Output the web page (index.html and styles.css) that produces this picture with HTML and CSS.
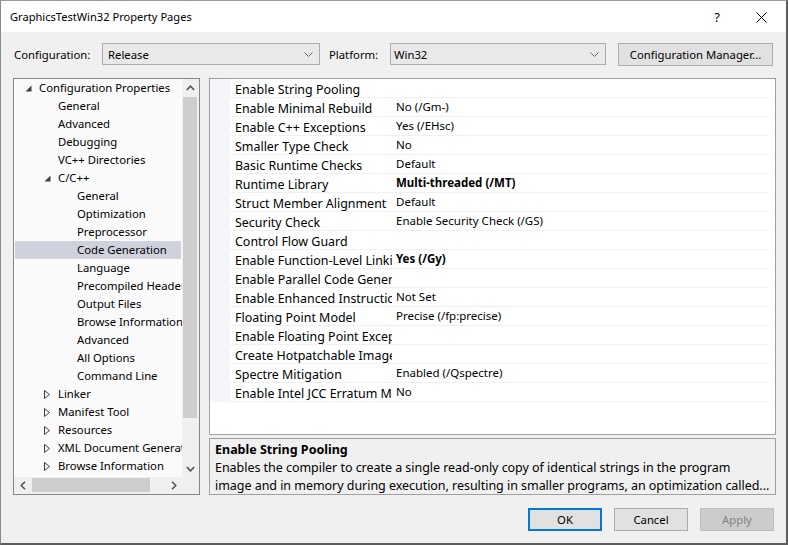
FILE: index.html
```html
<!DOCTYPE html>
<html>
<head>
<meta charset="utf-8">
<link rel="stylesheet" href="styles.css">
</head>
<body>
<div class="window">
  <div class="titlebar">
    <span class="title">GraphicsTestWin32 Property Pages</span>
    <span class="help">?</span>
    <span class="close"><svg width="11" height="11" viewBox="0 0 11 11"><path d="M0.5 0.5 L10.5 10.5 M10.5 0.5 L0.5 10.5" stroke="#000" stroke-width="1" fill="none"/></svg></span>
  </div>
  <div class="toolbar">
    <span class="label label-config">Configuration:</span>
    <div class="combo combo-config"><span class="combo-text">Release</span><svg class="chev" width="9" height="5" viewBox="0 0 9 5"><polyline points="0.5,0.5 4.5,4.5 8.5,0.5" fill="none" stroke="#6a6a6a" stroke-width="1"/></svg></div>
    <span class="label label-platform">Platform:</span>
    <div class="combo combo-platform"><span class="combo-text">Win32</span><svg class="chev" width="9" height="5" viewBox="0 0 9 5"><polyline points="0.5,0.5 4.5,4.5 8.5,0.5" fill="none" stroke="#6a6a6a" stroke-width="1"/></svg></div>
    <div class="btn btn-cfgmgr">Configuration Manager...</div>
  </div>
  <div class="main">
    <div class="tree">
      <div class="tree-items">
        <div class="trow l0"><span class="arrow"><svg width="7" height="7" viewBox="0 0 7 7"><polygon points="6.5,0.5 6.5,6.5 0.5,6.5" fill="#404040"/></svg></span><span class="ttext">Configuration Properties</span></div>
        <div class="trow l1"><span class="arrow"></span><span class="ttext">General</span></div>
        <div class="trow l1"><span class="arrow"></span><span class="ttext">Advanced</span></div>
        <div class="trow l1"><span class="arrow"></span><span class="ttext">Debugging</span></div>
        <div class="trow l1"><span class="arrow"></span><span class="ttext">VC++ Directories</span></div>
        <div class="trow l1"><span class="arrow"><svg width="7" height="7" viewBox="0 0 7 7"><polygon points="6.5,0.5 6.5,6.5 0.5,6.5" fill="#404040"/></svg></span><span class="ttext">C/C++</span></div>
        <div class="trow l2"><span class="arrow"></span><span class="ttext">General</span></div>
        <div class="trow l2"><span class="arrow"></span><span class="ttext">Optimization</span></div>
        <div class="trow l2"><span class="arrow"></span><span class="ttext">Preprocessor</span></div>
        <div class="trow l2 selected"><span class="arrow"></span><span class="ttext">Code Generation</span></div>
        <div class="trow l2"><span class="arrow"></span><span class="ttext">Language</span></div>
        <div class="trow l2"><span class="arrow"></span><span class="ttext">Precompiled Headers</span></div>
        <div class="trow l2"><span class="arrow"></span><span class="ttext">Output Files</span></div>
        <div class="trow l2"><span class="arrow"></span><span class="ttext">Browse Information</span></div>
        <div class="trow l2"><span class="arrow"></span><span class="ttext">Advanced</span></div>
        <div class="trow l2"><span class="arrow"></span><span class="ttext">All Options</span></div>
        <div class="trow l2"><span class="arrow"></span><span class="ttext">Command Line</span></div>
        <div class="trow l1"><span class="arrow"><svg width="6" height="9" viewBox="0 0 6 9"><polygon points="0.5,0.5 5.5,4.5 0.5,8.5" fill="none" stroke="#404040" stroke-width="1"/></svg></span><span class="ttext">Linker</span></div>
        <div class="trow l1"><span class="arrow"><svg width="6" height="9" viewBox="0 0 6 9"><polygon points="0.5,0.5 5.5,4.5 0.5,8.5" fill="none" stroke="#404040" stroke-width="1"/></svg></span><span class="ttext">Manifest Tool</span></div>
        <div class="trow l1"><span class="arrow"><svg width="6" height="9" viewBox="0 0 6 9"><polygon points="0.5,0.5 5.5,4.5 0.5,8.5" fill="none" stroke="#404040" stroke-width="1"/></svg></span><span class="ttext">Resources</span></div>
        <div class="trow l1"><span class="arrow"><svg width="6" height="9" viewBox="0 0 6 9"><polygon points="0.5,0.5 5.5,4.5 0.5,8.5" fill="none" stroke="#404040" stroke-width="1"/></svg></span><span class="ttext">XML Document Generator</span></div>
        <div class="trow l1"><span class="arrow"><svg width="6" height="9" viewBox="0 0 6 9"><polygon points="0.5,0.5 5.5,4.5 0.5,8.5" fill="none" stroke="#404040" stroke-width="1"/></svg></span><span class="ttext">Browse Information</span></div>
      </div>
      <div class="vscroll">
        <div class="sbtn"><svg width="9" height="6" viewBox="0 0 9 6"><polyline points="0.8,5 4.5,1.2 8.2,5" fill="none" stroke="#505050" stroke-width="1.5"/></svg></div>
        <div class="vtrack"><div class="vthumb"></div></div>
        <div class="sbtn"><svg width="9" height="6" viewBox="0 0 9 6"><polyline points="0.8,1 4.5,4.8 8.2,1" fill="none" stroke="#505050" stroke-width="1.5"/></svg></div>
      </div>
      <div class="hscroll">
        <div class="sbtn"><svg width="6" height="9" viewBox="0 0 6 9"><polyline points="5,0.8 1.2,4.5 5,8.2" fill="none" stroke="#505050" stroke-width="1.5"/></svg></div>
        <div class="htrack"><div class="hthumb"></div></div>
        <div class="sbtn"><svg width="6" height="9" viewBox="0 0 6 9"><polyline points="1,0.8 4.8,4.5 1,8.2" fill="none" stroke="#505050" stroke-width="1.5"/></svg></div>
      </div>
      <div class="corner"></div>
    </div>
    <div class="right">
      <div class="grid">
        <div class="grow"><span class="gutter"></span><span class="gname">Enable String Pooling</span><span class="gval"></span></div>
        <div class="grow"><span class="gutter"></span><span class="gname">Enable Minimal Rebuild</span><span class="gval">No (/Gm-)</span></div>
        <div class="grow"><span class="gutter"></span><span class="gname">Enable C++ Exceptions</span><span class="gval">Yes (/EHsc)</span></div>
        <div class="grow"><span class="gutter"></span><span class="gname">Smaller Type Check</span><span class="gval">No</span></div>
        <div class="grow"><span class="gutter"></span><span class="gname">Basic Runtime Checks</span><span class="gval">Default</span></div>
        <div class="grow"><span class="gutter"></span><span class="gname">Runtime Library</span><span class="gval bold">Multi-threaded (/MT)</span></div>
        <div class="grow"><span class="gutter"></span><span class="gname">Struct Member Alignment</span><span class="gval">Default</span></div>
        <div class="grow"><span class="gutter"></span><span class="gname">Security Check</span><span class="gval">Enable Security Check (/GS)</span></div>
        <div class="grow"><span class="gutter"></span><span class="gname">Control Flow Guard</span><span class="gval"></span></div>
        <div class="grow"><span class="gutter"></span><span class="gname">Enable Function-Level Linking</span><span class="gval bold">Yes (/Gy)</span></div>
        <div class="grow"><span class="gutter"></span><span class="gname">Enable Parallel Code Generation</span><span class="gval"></span></div>
        <div class="grow"><span class="gutter"></span><span class="gname">Enable Enhanced Instruction Set</span><span class="gval">Not Set</span></div>
        <div class="grow"><span class="gutter"></span><span class="gname">Floating Point Model</span><span class="gval">Precise (/fp:precise)</span></div>
        <div class="grow"><span class="gutter"></span><span class="gname">Enable Floating Point Exceptions</span><span class="gval"></span></div>
        <div class="grow"><span class="gutter"></span><span class="gname">Create Hotpatchable Image</span><span class="gval"></span></div>
        <div class="grow"><span class="gutter"></span><span class="gname">Spectre Mitigation</span><span class="gval">Enabled (/Qspectre)</span></div>
        <div class="grow"><span class="gutter"></span><span class="gname">Enable Intel JCC Erratum Mitigation</span><span class="gval">No</span></div>
      </div>
      <div class="desc">
        <div class="desc-title">Enable String Pooling</div>
        <div class="desc-line">Enables the compiler to create a single read-only copy of identical strings in the program</div>
        <div class="desc-line">image and in memory during execution, resulting in smaller programs, an optimization called...</div>
      </div>
    </div>
  </div>
  <div class="buttons">
    <div class="btn btn-dlg btn-ok">OK</div>
    <div class="btn btn-dlg">Cancel</div>
    <div class="btn btn-dlg btn-disabled">Apply</div>
  </div>
</div>
</body>
</html>
```

FILE: styles.css
```css
* { box-sizing: border-box; margin: 0; padding: 0; }
html, body { margin: 0; width: 788px; height: 545px; overflow: hidden; }
body {
  font-family: "Noto Sans", "Open Sans", sans-serif;
  font-size: 11.3px;
  color: #000;
  background: #f0f0f0;
}
.window {
  width: 788px;
  height: 545px;
  display: flex;
  flex-direction: column;
  background: #f0f0f0;
  border-left: 1px solid #8a8a8a;
  border-right: 2px solid #5c5c5c;
  border-bottom: 2px solid #5c5c5c;
  border-top: 1px solid #9a9a9a;
}
.titlebar {
  height: 31px;
  flex: none;
  background: #fff;
  display: flex;
  align-items: center;
  padding-left: 9px;
  font-size: 11.1px;
}
.title { flex: 1; }
.help { font-size: 13px; width: 14px; text-align: center; margin-right: 32px; }
.close { width: 11px; height: 11px; display: flex; margin-right: 19px; margin-top: 1px; }

.toolbar {
  flex: none;
  height: 24px;
  margin-top: 10px;
  padding-left: 13px;
  display: flex;
  align-items: center;
}
.label { display: block; }
.label-config { width: 88px; }
.label-platform { width: 61px; margin-left: 9px; }
.combo {
  height: 22px;
  border: 1px solid #adadad;
  background: #e9e9e9;
  display: flex;
  align-items: center;
  padding-left: 5px;
  padding-right: 6px;
}
.combo-text { flex: 1; }
.combo-config { width: 218px; }
.combo-platform { width: 216px; padding-left: 3px; }
.chev { display: block; }
.btn {
  border: 1px solid #adadad;
  background: #e1e1e1;
  display: flex;
  align-items: center;
  justify-content: center;
}
.btn-cfgmgr { width: 155px; height: 23px; margin-left: 12px; }

.main {
  flex: none;
  height: 417px;
  margin-top: 12px;
  padding-left: 12px;
  display: flex;
  gap: 9px;
}
.tree {
  width: 187px;
  height: 417px;
  border: 1px solid #828790;
  background: #fafafa;
  display: grid;
  grid-template-columns: 168px 17px;
  grid-template-rows: 398px 17px;
}
.tree-items {
  overflow: hidden;
  white-space: nowrap;
}
.trow {
  height: 18px;
  line-height: 18px;
  display: flex;
  align-items: center;
  padding-left: 6px;
  margin: 0 1px;
}
.trow.l0 { padding-left: 5px; }
.trow.l1 { padding-left: 24px; }
.trow.l2 { padding-left: 43px; }
.trow.selected { background: #cfd1dc; }
.arrow {
  flex: none;
  width: 19px;
  height: 18px;
  display: flex;
  align-items: center;
  padding-left: 5px;
}
.trow.l0 .arrow svg, .trow.l1 .arrow svg[height="7"] { margin-top: 1px; }
.ttext { flex: none; }

.vscroll {
  background: #f0f0f0;
  display: flex;
  flex-direction: column;
}
.sbtn {
  width: 17px;
  height: 17px;
  flex: none;
  display: flex;
  align-items: center;
  justify-content: center;
}
.vtrack { flex: 1; padding: 1px 1px 0 1px; }
.vthumb { width: 14px; height: 321px; background: #cdcdcd; }
.hscroll {
  background: #f0f0f0;
  display: flex;
}
.htrack { flex: 1; padding: 1px 0 0 1px; }
.hthumb { width: 118px; height: 14px; background: #cdcdcd; }
.corner { background: #f0f0f0; }

.right {
  width: 567px;
  display: flex;
  flex-direction: column;
  gap: 3px;
}
.grid {
  height: 357px;
  border: 1px solid #a0a0a0;
  background: #fff;
  padding-right: 6px;
}
.grow {
  height: 19px;
  display: flex;
  white-space: nowrap;
}
.gutter {
  flex: none;
  width: 20px;
  background: #f5f6f9;
}
.gname {
  flex: none;
  width: 162px;
  overflow: hidden;
  padding-left: 5px;
  padding-top: 2px;
  font-size: 12.45px;
  line-height: 17px;
  border-bottom: 1px solid #f0f0f0;
}
.gval {
  flex: 1;
  padding-left: 4px;
  padding-top: 1px;
  font-size: 11.5px;
  line-height: 16px;
  border-bottom: 1px solid #f0f0f0;
}
.gval.bold { font-weight: bold; }
.desc {
  height: 57px;
  border: 1px solid #a0a0a0;
  background: #f0f0f0;
  padding: 2px 1px 0 5px;
  overflow: hidden;
  font-size: 12.5px;
  line-height: 18px;
}
.desc-title { font-weight: bold; }
.desc-line { white-space: nowrap; overflow: hidden; letter-spacing: -0.04px; }

.buttons {
  flex: none;
  height: 23px;
  margin-top: 13px;
  padding-right: 12px;
  display: flex;
  justify-content: flex-end;
  gap: 12px;
}
.btn-dlg { width: 74px; height: 23px; }
.btn-ok { border: 2px solid #0078d7; }
.btn-disabled { background: #cccccc; border-color: #bfbfbf; color: #838383; }
```
